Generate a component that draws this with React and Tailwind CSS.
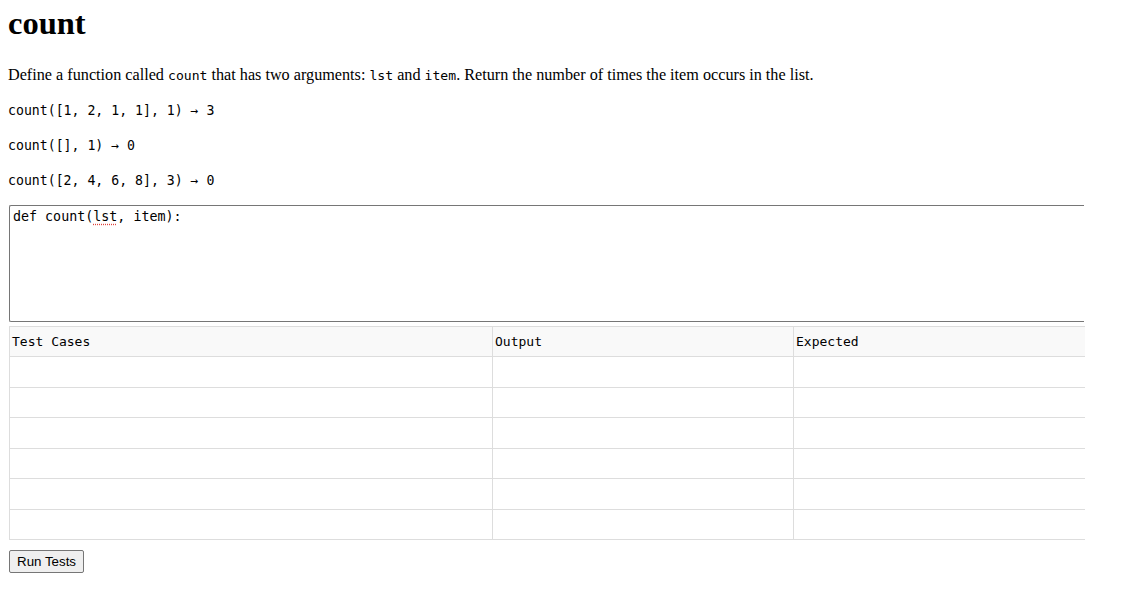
export default function App() {
  const rows = [0, 1, 2, 3, 4, 5]
  const mono = "font-['DejaVu_Sans_Mono','Liberation_Mono',monospace]"
  return (
    <div className="min-h-[594px] bg-white px-2 pb-2 text-black font-['Liberation_Serif','Times_New_Roman',serif]">
      <h1 className="mt-[5px] text-[32.5px] font-bold leading-[37px]">count</h1>

      <p className="mt-[24px] text-[16.2px] leading-[18px]">
        Define a function called <code className={`${mono} text-[13.1px]`}>count</code> that has two arguments:{' '}
        <code className={`${mono} text-[13.1px]`}>lst</code> and <code className={`${mono} text-[13.1px]`}>item</code>. Return the
        number of times the item occurs in the list.
      </p>

      <div className={`${mono} text-[13.2px] leading-[15px]`}>
        <div className="mt-[18px]">count([1, 2, 1, 1], 1) → 3</div>
        <div className="mt-[20px]">count([], 1) → 0</div>
        <div className="mt-[20px]">count([2, 4, 6, 8], 3) → 0</div>
      </div>

      <div
        className={`${mono} mt-[17px] ml-px h-[117px] w-[1075px] rounded-l-[2px] border border-r-0 border-[#767676] px-[3px] pt-[3px] pb-[2px] text-[13.33px] leading-[16px]`}
      >
        def count(
        <span className="underline decoration-dotted decoration-[#e0443e] underline-offset-[3px]">lst</span>, item):
      </div>

      <table className={`${mono} mt-[4px] ml-px w-[1075px] table-fixed border-collapse text-[13px]`}>
        <colgroup>
          <col className="w-[483px]" />
          <col className="w-[301px]" />
          <col className="w-[291px]" />
        </colgroup>
        <thead>
          <tr className="h-[30px] bg-[#f9f9f9]">
            <th className="border border-r-0 border-[#dddddd] px-[2px] text-left font-normal">Test Cases</th>
            <th className="border border-r-0 border-[#dddddd] px-[2px] text-left font-normal">Output</th>
            <th className="border border-r-0 border-[#dddddd] px-[2px] text-left font-normal">Expected</th>
          </tr>
        </thead>
        <tbody>
          {rows.map((r) => (
            <tr key={r} className="h-[30.5px]">
              <td className="border border-r-0 border-[#dddddd]"></td>
              <td className="border border-r-0 border-[#dddddd]"></td>
              <td className="border border-r-0 border-[#dddddd]"></td>
            </tr>
          ))}
        </tbody>
      </table>

      <button className="mt-[10px] ml-px h-[23px] rounded-[2px] border border-[#767676] bg-[#efefef] px-[7px] text-[13.33px] leading-[15px] font-['Liberation_Sans',Arial,sans-serif]">
        Run Tests
      </button>
    </div>
  )
}
